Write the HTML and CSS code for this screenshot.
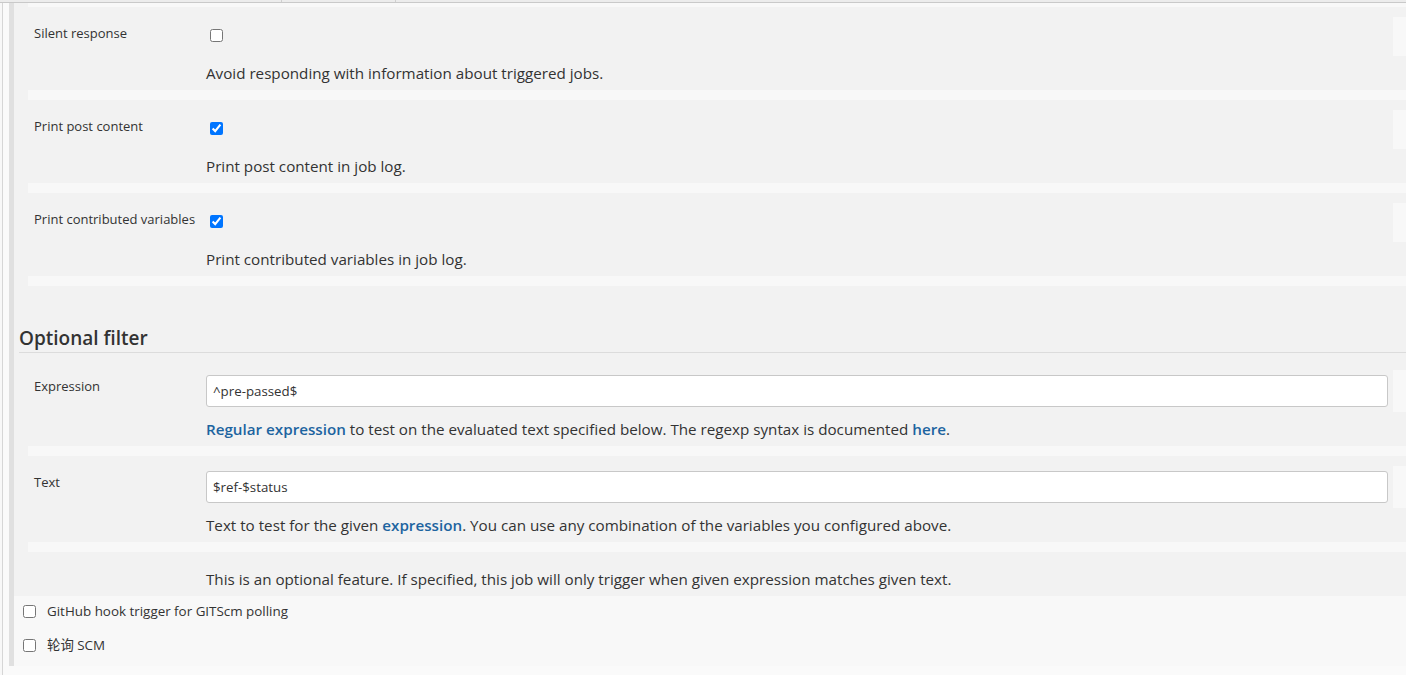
FILE: index.html
```html
<!DOCTYPE html>
<html>
<head>
<meta charset="utf-8">
<link rel="stylesheet" href="styles.css">
</head>
<body>
<div class="tabs"><span class="tab t1"></span><span class="tab t2"></span></div>
<div class="frame">
  <div class="section">
    <div class="block">
      <div class="rows first">
        <div class="row">
          <div class="label">Silent response</div>
          <div class="control">
            <div class="cb-wrap"><input type="checkbox" class="cb"></div>
            <div class="desc">Avoid responding with information about triggered jobs.</div>
          </div>
          <div class="help short"></div>
        </div>
        <div class="row">
          <div class="label">Print post content</div>
          <div class="control">
            <div class="cb-wrap"><input type="checkbox" class="cb" checked></div>
            <div class="desc">Print post content in job log.</div>
          </div>
          <div class="help short"></div>
        </div>
        <div class="row">
          <div class="label">Print contributed variables</div>
          <div class="control">
            <div class="cb-wrap"><input type="checkbox" class="cb" checked></div>
            <div class="desc">Print contributed variables in job log.</div>
          </div>
          <div class="help short"></div>
        </div>
      </div>

      <div class="heading">Optional filter</div>

      <div class="rows">
        <div class="row">
          <div class="label">Expression</div>
          <div class="control">
            <input type="text" class="text-input" value="^pre-passed$">
            <div class="desc"><a class="link">Regular expression</a> to test on the evaluated text specified below. The regexp syntax is documented <a class="link">here</a>.</div>
          </div>
          <div class="help tall"></div>
        </div>
        <div class="row">
          <div class="label">Text</div>
          <div class="control">
            <input type="text" class="text-input" value="$ref-$status">
            <div class="desc">Text to test for the given <a class="link">expression</a>. You can use any combination of the variables you configured above.</div>
          </div>
          <div class="help tall"></div>
        </div>
        <div class="row note">
          <div class="label"></div>
          <div class="control">
            <div class="desc">This is an optional feature. If specified, this job will only trigger when given expression matches given text.</div>
          </div>
          <div></div>
        </div>
      </div>
    </div>

    <div class="triggers">
      <label class="trigger"><input type="checkbox" class="cb2"><span>GitHub hook trigger for GITScm polling</span></label>
      <label class="trigger"><input type="checkbox" class="cb2"><span>轮询 SCM</span></label>
    </div>
  </div>
</div>
</body>
</html>
```

FILE: styles.css
```css
html, body {
  margin: 0;
  padding: 0;
  overflow: hidden;
  background: #f8f8f8;
  font-family: "Open Sans", "Noto Sans CJK SC", sans-serif;
  color: #333;
}

.tabs {
  display: flex;
  height: 2px;
  background: #ececec;
  border-bottom: 1px solid #c9c9c9;
}
.tab { display: block; height: 2px; }
.t1 { width: 281px; border-right: 1px solid #cfcfcf; }
.t2 { width: 113px; border-right: 1px solid #cfcfcf; }

.frame {
  margin-left: 2px;
  border-left: 1px solid #d6d6d6;
  padding-left: 6px;
  height: 672px;
  background: #fafafa;
}

.section {
  border-left: 5px solid #e0e0e0;
  background: #f8f8f8;
}

.block {
  background: #f2f2f2;
}

.rows {
  margin-left: 14px;
}
.rows.first {
  border-top: 4px solid #f8f8f8;
}

.row {
  display: grid;
  grid-template-columns: 167px 1182px 13px;
  column-gap: 5px;
  padding: 10px 0 7px 6px;
  border-bottom: 10px solid #f8f8f8;
  background: #f2f2f2;
}

.label {
  padding-top: 7px;
  font-size: 13px;
  line-height: 18px;
  white-space: nowrap;
}

.control {
  padding-top: 5px;
}

.cb-wrap {
  box-sizing: border-box;
  height: 29px;
  padding-top: 7px;
}
.cb {
  display: block;
  margin: 0 0 0 4px;
  width: 13px;
  height: 13px;
}

.text-input {
  display: block;
  box-sizing: border-box;
  width: 100%;
  height: 32px;
  margin: 0;
  padding: 0 6px;
  border: 1px solid #c8c8c8;
  border-radius: 3px;
  background: #fff;
  font-family: "Open Sans", sans-serif;
  font-size: 13.3px;
  color: #333;
  outline: none;
}

.desc {
  margin-top: 12px;
  font-size: 15.2px;
  line-height: 20px;
  white-space: nowrap;
}

.link {
  color: #1d64a0;
  font-weight: 600;
  text-decoration: none;
}

.help {
  background: #f8f8f8;
}
.help.short { height: 39px; }
.help.tall { height: 42px; }

.row.note {
  padding-top: 12px;
  border-bottom: none;
}
.row.note .control { padding-top: 5px; }
.row.note .desc { margin-top: 0; }

.heading {
  margin: 40px 0 7px 5px;
  font-size: 19px;
  font-weight: 600;
  line-height: 25px;
  padding-bottom: 1px;
  border-bottom: 1px solid #dcdcdc;
  white-space: nowrap;
}

.triggers {
  padding: 6px 0 12px 9px;
  display: flex;
  flex-direction: column;
  gap: 16px;
}
.trigger {
  display: flex;
  align-items: center;
  height: 18px;
  font-size: 13.4px;
  line-height: 18px;
}
.cb2 {
  margin: 0 11px 0 0;
  width: 13px;
  height: 13px;
}
```
